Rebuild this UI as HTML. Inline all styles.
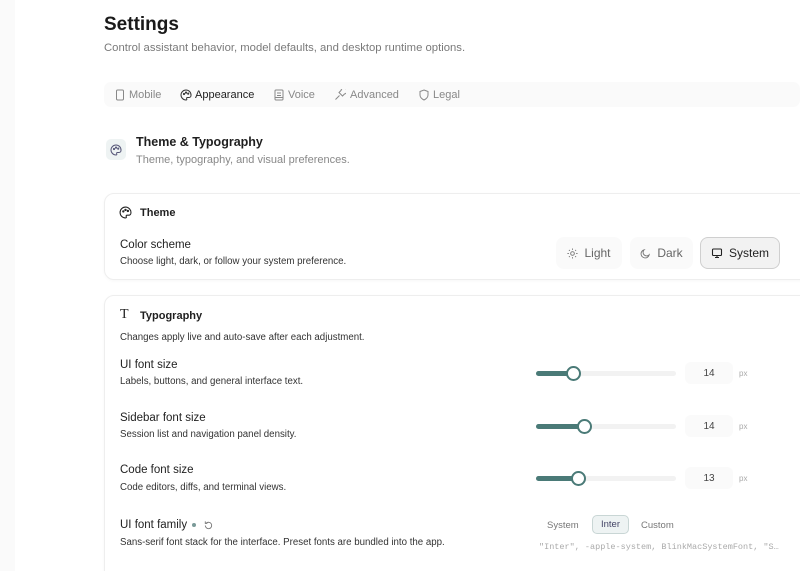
<!DOCTYPE html>
<html><head><meta charset="utf-8"><style>
*{margin:0;padding:0;box-sizing:border-box}
html,body{width:800px;height:571px;overflow:hidden}
body{background:#fff;font-family:"Liberation Sans",sans-serif;color:#1f1f1f;position:relative}
.a{position:absolute;white-space:nowrap}
.side{left:0;top:0;width:15px;height:571px;background:#fafafa}
.card{position:absolute;background:#fff;border:1px solid #eeeeee;border-radius:10px;box-shadow:0 1px 3px rgba(0,0,0,.03)}
.t{font-size:9.7px;color:#333}
svg{position:absolute}
.btn{position:absolute;height:32px;border-radius:8px;background:#fafafa;font-size:12px;color:#666;display:flex;align-items:center;justify-content:center;gap:6px}
.track{position:absolute;height:5px;border-radius:3px;background:#f2f2f2}
.fill{position:absolute;left:0;top:0;height:5px;border-radius:3px;background:#4a7a77}
.knob{position:absolute;width:15px;height:15px;border-radius:50%;background:#fff;border:2px solid #4a7a77;top:-5px}
.num{position:absolute;width:48px;height:22px;border-radius:6px;background:#fafafa;font-size:10px;color:#444;text-align:center;line-height:23px}
.px{position:absolute;font-size:8px;color:#aaa}
</style></head><body>
<div class="a side"></div>
<div class="a" style="left:104px;top:14px;font-size:19px;font-weight:bold;color:#1a1a1a">Settings</div>
<div class="a" style="left:104px;top:42px;font-size:11.3px;color:#7a7a7a">Control assistant behavior, model defaults, and desktop runtime options.</div>

<div class="a" style="left:104px;top:82px;width:696px;height:25px;background:#fafafa;border-radius:7px"></div>
<svg style="left:114px;top:89px" width="12" height="12" viewBox="0 0 12 12" fill="none" stroke="#888" stroke-width="1"><rect x="2.5" y="1" width="7" height="10" rx="1.2"/></svg>
<div class="a" style="left:129px;top:89px;font-size:11px;color:#888">Mobile</div>
<svg style="left:180px;top:89px" width="12" height="12" viewBox="0 0 12 12" fill="none" stroke="#333" stroke-width="1"><path d="M6 1a5 5 0 0 0 0 10c.8 0 1-.6.7-1.2-.3-.6 0-1.3.8-1.3H9a2 2 0 0 0 2-2A5 5 0 0 0 6 1z"/><circle cx="4" cy="5" r=".6"/><circle cx="6" cy="3.6" r=".6"/><circle cx="8.2" cy="4.6" r=".6"/></svg>
<div class="a" style="left:195px;top:89px;font-size:11px;color:#222">Appearance</div>
<svg style="left:273px;top:89px" width="12" height="12" viewBox="0 0 12 12" fill="none" stroke="#888" stroke-width="1"><rect x="2" y="1" width="8" height="10" rx="1"/><path d="M4 4h4M4 6.5h4M2 8.5h8"/></svg>
<div class="a" style="left:288px;top:89px;font-size:11px;color:#888">Voice</div>
<svg style="left:334px;top:89px" width="12" height="12" viewBox="0 0 12 12" fill="none" stroke="#888" stroke-width="1"><path d="M1.5 10.5l4-4M7 1.5a3 3 0 1 1 3.5 3.5L8.5 7 5 3.5z"/></svg>
<div class="a" style="left:350px;top:89px;font-size:11px;color:#888">Advanced</div>
<svg style="left:418px;top:89px" width="12" height="12" viewBox="0 0 12 12" fill="none" stroke="#888" stroke-width="1"><path d="M6 1l4 1.5v3.5c0 2.5-2 4-4 5-2-1-4-2.5-4-5V2.5z"/></svg>
<div class="a" style="left:433px;top:89px;font-size:11px;color:#888">Legal</div>

<div class="a" style="left:106px;top:139px;width:20px;height:21px;border-radius:5px;background:#eef3f3"></div>
<svg style="left:110px;top:144px" width="12" height="12" viewBox="0 0 12 12" fill="none" stroke="#557" stroke-width="1"><path d="M6 1a5 5 0 0 0 0 10c.8 0 1-.6.7-1.2-.3-.6 0-1.3.8-1.3H9a2 2 0 0 0 2-2A5 5 0 0 0 6 1z"/><circle cx="4" cy="5" r=".6"/><circle cx="6" cy="3.6" r=".6"/><circle cx="8.2" cy="4.6" r=".6"/></svg>
<div class="a" style="left:136px;top:135px;font-size:12.5px;font-weight:bold;color:#1f1f1f">Theme &amp; Typography</div>
<div class="a" style="left:136px;top:154px;font-size:11px;color:#888">Theme, typography, and visual preferences.</div>

<div class="card" style="left:104px;top:193px;width:710px;height:87px"></div>
<svg style="left:119px;top:206px" width="13" height="13" viewBox="0 0 12 12" fill="none" stroke="#222" stroke-width="1"><path d="M6 1a5 5 0 0 0 0 10c.8 0 1-.6.7-1.2-.3-.6 0-1.3.8-1.3H9a2 2 0 0 0 2-2A5 5 0 0 0 6 1z"/><circle cx="4" cy="5" r=".6"/><circle cx="6" cy="3.6" r=".6"/><circle cx="8.2" cy="4.6" r=".6"/></svg>
<div class="a" style="left:140px;top:207px;font-size:11px;font-weight:bold">Theme</div>
<div class="a" style="left:120px;top:239px;font-size:11.5px;color:#222">Color scheme</div>
<div class="a t" style="left:120px;top:256px">Choose light, dark, or follow your system preference.</div>
<div class="btn" style="left:556px;top:237px;width:66px">
<svg style="position:static" width="11" height="11" viewBox="0 0 12 12" fill="none" stroke="#777" stroke-width="1"><circle cx="6" cy="6" r="2"/><path d="M6 .5v1.5M6 10v1.5M.5 6H2M10 6h1.5M2.1 2.1l1 1M8.9 8.9l1 1M2.1 9.9l1-1M8.9 3.1l1-1"/></svg>Light</div>
<div class="btn" style="left:630px;top:237px;width:63px">
<svg style="position:static" width="11" height="11" viewBox="0 0 12 12" fill="none" stroke="#777" stroke-width="1"><path d="M10 7.5A4.5 4.5 0 1 1 4.5 2 3.5 3.5 0 0 0 10 7.5z"/></svg>Dark</div>
<div class="btn" style="left:700px;top:237px;width:80px;background:#f2f2f2;border:1px solid #cfcfcf;color:#222">
<svg style="position:static" width="12" height="12" viewBox="0 0 12 12" fill="none" stroke="#222" stroke-width="1.1"><rect x="1.5" y="2" width="9" height="6.5" rx="1"/><path d="M4 10.5h4M6 8.5v2"/></svg>System</div>

<div class="card" style="left:104px;top:295px;width:710px;height:300px"></div>
<div class="a" style="left:120px;top:307px;font-size:14px;font-family:'Liberation Serif',serif;color:#222">T</div>
<div class="a" style="left:140px;top:310px;font-size:11px;font-weight:bold">Typography</div>
<div class="a t" style="left:120px;top:332px">Changes apply live and auto-save after each adjustment.</div>

<div class="a" style="left:120px;top:359px;font-size:11.5px;color:#222">UI font size</div>
<div class="a t" style="left:120px;top:376px">Labels, buttons, and general interface text.</div>
<div class="track" style="left:536px;top:371px;width:140px"><div class="fill" style="width:38px"></div><div class="knob" style="left:30px"></div></div>
<div class="num" style="left:685px;top:362px">14</div><div class="px" style="left:739px;top:369px">px</div>

<div class="a" style="left:120px;top:412px;font-size:11.5px;color:#222">Sidebar font size</div>
<div class="a t" style="left:120px;top:429px">Session list and navigation panel density.</div>
<div class="track" style="left:536px;top:424px;width:140px"><div class="fill" style="width:49px"></div><div class="knob" style="left:41px"></div></div>
<div class="num" style="left:685px;top:415px">14</div><div class="px" style="left:739px;top:422px">px</div>

<div class="a" style="left:120px;top:464px;font-size:11.5px;color:#222">Code font size</div>
<div class="a t" style="left:120px;top:482px">Code editors, diffs, and terminal views.</div>
<div class="track" style="left:536px;top:476px;width:140px"><div class="fill" style="width:43px"></div><div class="knob" style="left:35px"></div></div>
<div class="num" style="left:685px;top:467px">13</div><div class="px" style="left:739px;top:474px">px</div>

<div class="a" style="left:120px;top:519px;font-size:11.5px;color:#222">UI font family</div>
<div class="a" style="left:192px;top:523px;width:4px;height:4px;border-radius:50%;background:#7a9a98"></div>
<svg style="left:203px;top:520px" width="11" height="11" viewBox="0 0 12 12" fill="none" stroke="#777" stroke-width="1"><path d="M2.5 6a3.5 3.5 0 1 0 1-2.5M2.5 1.5v2.2h2.2"/></svg>
<div class="a t" style="left:120px;top:537px">Sans-serif font stack for the interface. Preset fonts are bundled into the app.</div>
<div class="a" style="left:547px;top:520px;font-size:9.5px;color:#777">System</div>
<div class="a" style="left:592px;top:515px;width:37px;height:19px;border-radius:5px;background:#eef3f3;border:1px solid #c9d6d5;font-size:9.5px;color:#446;text-align:center;line-height:18px">Inter</div>
<div class="a" style="left:641px;top:520px;font-size:9.5px;color:#777">Custom</div>
<div class="a" style="left:539px;top:542px;font-size:8.5px;font-family:'Liberation Mono',monospace;color:#aaa">"Inter", -apple-system, BlinkMacSystemFont, "S…</div>
</body></html>
